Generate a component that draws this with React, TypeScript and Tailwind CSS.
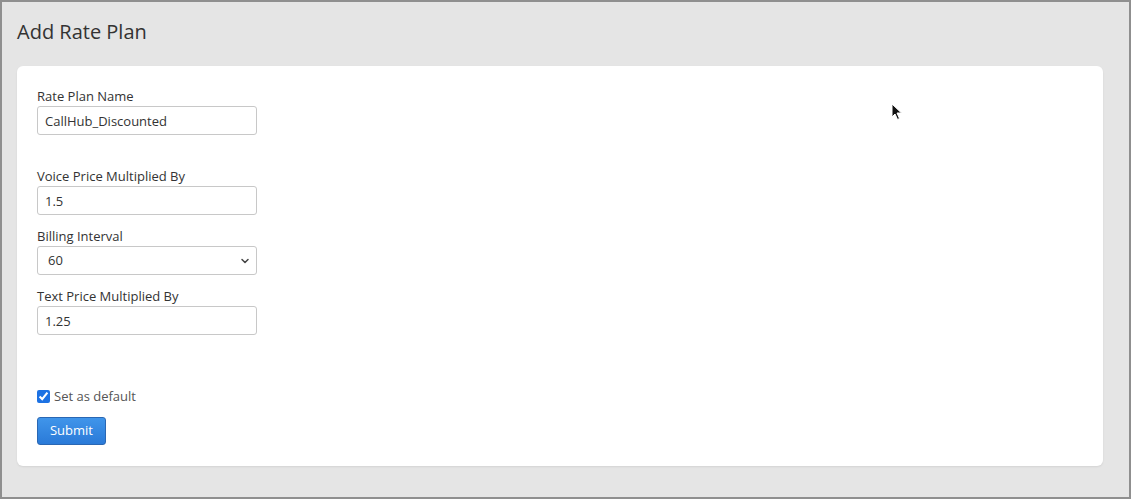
import { ChevronDown } from "lucide-react";

function Field({ label, value, className = "" }: { label: string; value: string; className?: string }) {
    return (
        <div className={className}>
            <label className="block text-[13px] leading-[19px] text-[#333]">{label}</label>
            <input
                readOnly
                value={value}
                className="block w-[220px] h-[29px] px-[7px] text-[13px] text-[#333] bg-white border border-[#c8c8c8] rounded-[3px] outline-none"
            />
        </div>
    );
}

export default function App() {
    return (
        <div
            className="w-[1131px] h-[499px] border-2 border-[#8f8f8f] bg-[#e5e5e5] pl-[15px] pt-[16px]"
            style={{ fontFamily: '"Open Sans", "Liberation Sans", sans-serif' }}
        >
            <h1 className="text-[20px] leading-[28px] text-[#333]">Add Rate Plan</h1>

            <div className="relative mt-5 w-[1086px] h-[400px] bg-white rounded-md shadow-[0_1px_2px_rgba(0,0,0,0.08)] pl-5 pt-[21px]">
                <Field label="Rate Plan Name" value="CallHub_Discounted" />
                <Field label="Voice Price Multiplied By" value="1.5" className="mt-8" />

                <div className="mt-3">
                    <label className="block text-[13px] leading-[19px] text-[#333]">Billing Interval</label>
                    <div className="relative w-[220px] h-[29px] border border-[#c8c8c8] rounded-[3px] flex items-center pl-[10px] text-[13px] text-[#333]">
                        60
                        <ChevronDown className="absolute right-[5px] top-[8px] w-[12px] h-[12px] text-[#444]" strokeWidth={3} />
                    </div>
                </div>

                <Field label="Text Price Multiplied By" value="1.25" className="mt-3" />

                <label className="mt-[52px] flex items-center gap-[4px] text-[13px] leading-[18px] text-[#555]">
                    <input type="checkbox" defaultChecked className="w-[13px] h-[13px] m-0 accent-[#1d72e3]" />
                    Set as default
                </label>

                <button className="mt-3 w-[69px] h-[28px] text-[13px] text-white rounded-[3px] border border-[#2a67b3] bg-gradient-to-b from-[#4095ea] to-[#2a7ad8]">
                    Submit
                </button>

                <svg className="absolute left-[874px] top-[37px]" width="12" height="18" viewBox="0 0 12 18">
                    <path d="M1 1 L1 14 L4 11 L6.5 16.5 L8.5 15.5 L6 10 L10.5 10 Z" fill="#111" stroke="#fff" strokeWidth="1" />
                </svg>
            </div>
        </div>
    );
}
